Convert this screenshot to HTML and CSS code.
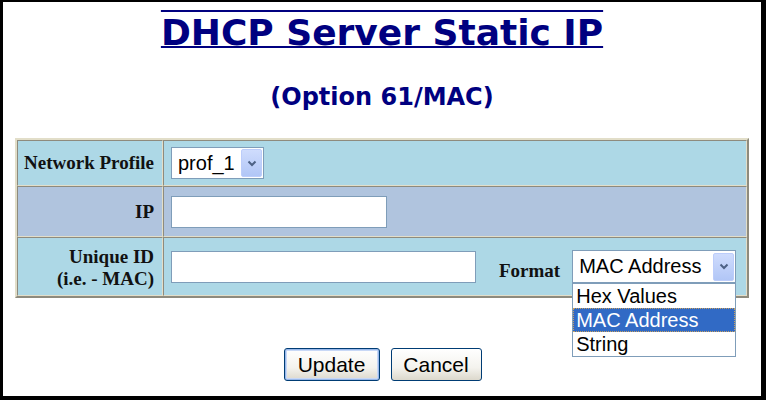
FILE: index.html
```html
<!DOCTYPE html>
<html>
<head>
<meta charset="utf-8">
<link rel="stylesheet" href="styles.css">
</head>
<body>
<div class="frame">
  <h1 class="title">DHCP Server Static IP</h1>
  <h2 class="subtitle">(Option 61/MAC)</h2>
  <table class="form">
    <tr class="r1">
      <th>Network Profile</th>
      <td>
        <div class="sel sel-prof">
          <span class="sel-text">prof_1</span>
          <span class="sel-btn"><svg width="10" height="7" viewBox="0 0 10 7"><path d="M1.5 1.5 L5 5 L8.5 1.5" fill="none" stroke="#4d6185" stroke-width="2"/></svg></span>
        </div>
      </td>
    </tr>
    <tr class="r2">
      <th>IP</th>
      <td><div class="inp inp-ip"></div></td>
    </tr>
    <tr class="r3">
      <th>Unique ID<br>(i.e. - MAC)</th>
      <td>
        <div class="row3">
          <div class="inp inp-uid"></div>
          <span class="fmt-label">Format</span>
          <div class="sel-wrap">
            <div class="sel sel-fmt">
              <span class="sel-text">MAC Address</span>
              <span class="sel-btn"><svg width="10" height="7" viewBox="0 0 10 7"><path d="M1.5 1.5 L5 5 L8.5 1.5" fill="none" stroke="#4d6185" stroke-width="2"/></svg></span>
            </div>
            <ul class="dropdown">
              <li>Hex Values</li>
              <li class="active">MAC Address</li>
              <li>String</li>
            </ul>
          </div>
        </div>
      </td>
    </tr>
  </table>
  <div class="buttons">
    <button class="btn btn-update">Update</button>
    <button class="btn btn-cancel">Cancel</button>
  </div>
</div>
</body>
</html>
```
FILE: styles.css
```css
html, body {
  margin: 0;
  padding: 0;
  background: #000;
}
.frame {
  box-sizing: border-box;
  width: 766px;
  height: 400px;
  background: #fff;
  border-style: solid;
  border-color: #000;
  border-width: 2px 5px 4px 3px;
  overflow: hidden;
}
.title {
  margin: 10px 0 0;
  font-family: "DejaVu Sans", sans-serif;
  font-weight: bold;
  font-size: 36px;
  line-height: 42px;
  color: #000080;
  text-align: center;
  text-decoration: underline overline;
  text-decoration-thickness: 2px;
}
.subtitle {
  margin: 29px 0 0;
  font-family: "DejaVu Sans", sans-serif;
  font-weight: bold;
  font-size: 24px;
  line-height: 28px;
  color: #000080;
  text-align: center;
}
.form {
  width: 734px;
  margin: 27px auto 0;
  border-collapse: separate;
  border-spacing: 0;
  border: 2px outset #e2dec9;
  background: #add8e6;
}
.form th, .form td {
  border: 1px inset #e2dec9;
  padding: 0;
}
.form th {
  width: 136px;
  padding-right: 8px;
  text-align: right;
  font-family: "Liberation Serif", serif;
  font-weight: bold;
  font-size: 19px;
  line-height: 22px;
  color: #111;
}
.form td {
  padding-left: 6px;
}
.r1 th, .r1 td { height: 44px; }
.r2 th, .r2 td { height: 49px; background: #b0c4de; }
.r3 th, .r3 td { height: 57px; }
.r3 th { padding-top: 2px; height: 55px; }

.sel {
  box-sizing: border-box;
  display: flex;
  align-items: center;
  height: 32px;
  border: 1px solid #7f9db9;
  background: #fff;
  font-family: "Liberation Sans", sans-serif;
  font-size: 20px;
  color: #000;
  padding: 1px 1px 1px 6px;
}
.sel-text {
  flex: 1;
  white-space: nowrap;
}
.sel-btn {
  box-sizing: border-box;
  width: 21px;
  height: 28px;
  border: 1px solid #bccdfb;
  border-radius: 2px;
  background: linear-gradient(#cfdcfd, #b1c6f6);
  display: flex;
  align-items: center;
  justify-content: center;
}
.sel-prof {
  width: 93px;
  margin-left: 1px;
}
.inp {
  box-sizing: border-box;
  height: 32px;
  border: 1px solid #7f9db9;
  background: #fff;
  margin-left: 1px;
}
.inp-ip { width: 216px; }
.inp-uid { width: 305px; }
.row3 {
  display: flex;
  align-items: center;
}
.fmt-label {
  margin-left: 23px;
  margin-top: 8px;
  font-family: "Liberation Serif", serif;
  font-weight: bold;
  font-size: 19px;
  color: #111;
}
.sel-wrap {
  position: relative;
  margin-left: 12px;
}
.sel-fmt {
  width: 164px;
  height: 33px;
}
.dropdown {
  position: absolute;
  left: 0;
  top: 33px;
  width: 164px;
  box-sizing: border-box;
  margin: 0;
  padding: 0;
  list-style: none;
  background: #fff;
  border: 1px solid #7f9db9;
  font-family: "Liberation Sans", sans-serif;
  font-size: 20px;
  line-height: 24px;
  color: #000;
  z-index: 2;
}
.dropdown li {
  height: 24px;
  padding-left: 3px;
  white-space: nowrap;
}
.dropdown li.active {
  background: #316ac5;
  color: #fff;
  outline: 1px dotted #c8a060;
  outline-offset: -1px;
}
.buttons {
  display: flex;
  justify-content: center;
  gap: 11px;
  margin-top: 50px;
  padding-left: 1px;
}
.btn {
  box-sizing: border-box;
  height: 33px;
  border: 1px solid #003c74;
  border-radius: 3px;
  background: linear-gradient(#ffffff, #f4f3ee 60%, #dcd8cc);
  font-family: "Liberation Sans", sans-serif;
  font-size: 21px;
  color: #000;
  padding: 0;
}
.btn-update {
  width: 96px;
  box-shadow: inset 0 0 0 1px #98b8ea, inset 0 0 0 2px #c8d8f6;
}
.btn-cancel {
  width: 91px;
}
```
